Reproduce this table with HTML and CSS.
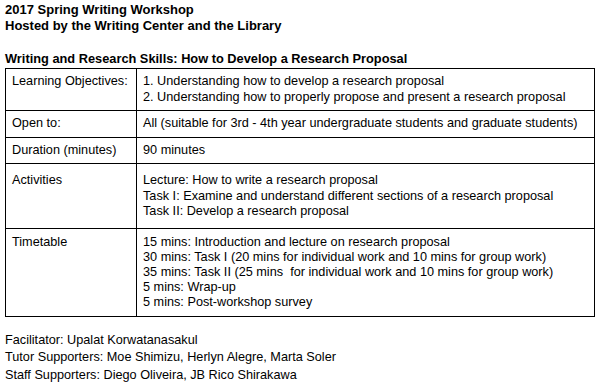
FILE: index.html
```html
<!DOCTYPE html>
<html lang="en">
<head>
  <meta charset="UTF-8" />
  <title>2017 Spring Writing Workshop</title>
  <link rel="stylesheet" href="styles.css">
</head>
<body>

  <div class="page">
    <div class="header">
      <div>2017 Spring Writing Workshop</div>
      <div>Hosted by the Writing Center and the Library</div>
    </div>

    <div class="subtitle">Writing and Research Skills: How to Develop a Research Proposal</div>

    <table class="info">
      <tr class="row-objectives">
        <td class="label">Learning Objectives:</td>
        <td>1. Understanding how to develop a research proposal<br>
            2. Understanding how to properly propose and present a research proposal</td>
      </tr>
      <tr>
        <td class="label">Open to:</td>
        <td>All (suitable for 3rd - 4th year undergraduate students and graduate students)</td>
      </tr>
      <tr>
        <td class="label">Duration (minutes)</td>
        <td>90 minutes</td>
      </tr>
      <tr class="row-activities">
        <td class="label">Activities</td>
        <td>Lecture: How to write a research proposal<br>
            Task I: Examine and understand different sections of a research proposal<br>
            Task II: Develop a research proposal</td>
      </tr>
      <tr class="row-timetable">
        <td class="label">Timetable</td>
        <td>15 mins: Introduction and lecture on research proposal<br>
            30 mins: Task I (20 mins for individual work and 10 mins for group work)<br>
            35 mins: Task II (25 mins &nbsp;for individual work and 10 mins for group work)<br>
            5 mins: Wrap-up<br>
            5 mins: Post-workshop survey</td>
      </tr>
    </table>

    <div class="credits">
      <div>Facilitator: Upalat Korwatanasakul</div>
      <div>Tutor Supporters: Moe Shimizu, Herlyn Alegre, Marta Soler</div>
      <div>Staff Supporters: Diego Oliveira, JB Rico Shirakawa</div>
    </div>
  </div>

</body>
</html>
```

FILE: styles.css
```css
body {
  margin: 0;
  background: #fff;
  color: #000;
  font-family: "Liberation Sans", Arial, sans-serif;
  font-size: 12.7px;
}

.page {
  padding: 2px 5px 0 5px;
}

.header {
  font-size: 13px;
  font-weight: bold;
  line-height: 16px;
}

.subtitle {
  font-size: 12.8px;
  font-weight: bold;
  line-height: 16px;
  margin-top: 17px;
}

.info {
  border-collapse: collapse;
  width: 590px;
  margin-top: 1px;
}

.info td {
  border: 1px solid #000;
  padding: 5px 6px;
  line-height: 15.5px;
  vertical-align: top;
  white-space: nowrap;
}

.info .label {
  width: 118px;
}

.row-activities td {
  padding-top: 9px;
  padding-bottom: 8px;
}

.row-timetable td {
  padding-top: 6px;
  padding-bottom: 6px;
  line-height: 15px;
}

.credits {
  margin-top: 15px;
  line-height: 17.5px;
}
```
